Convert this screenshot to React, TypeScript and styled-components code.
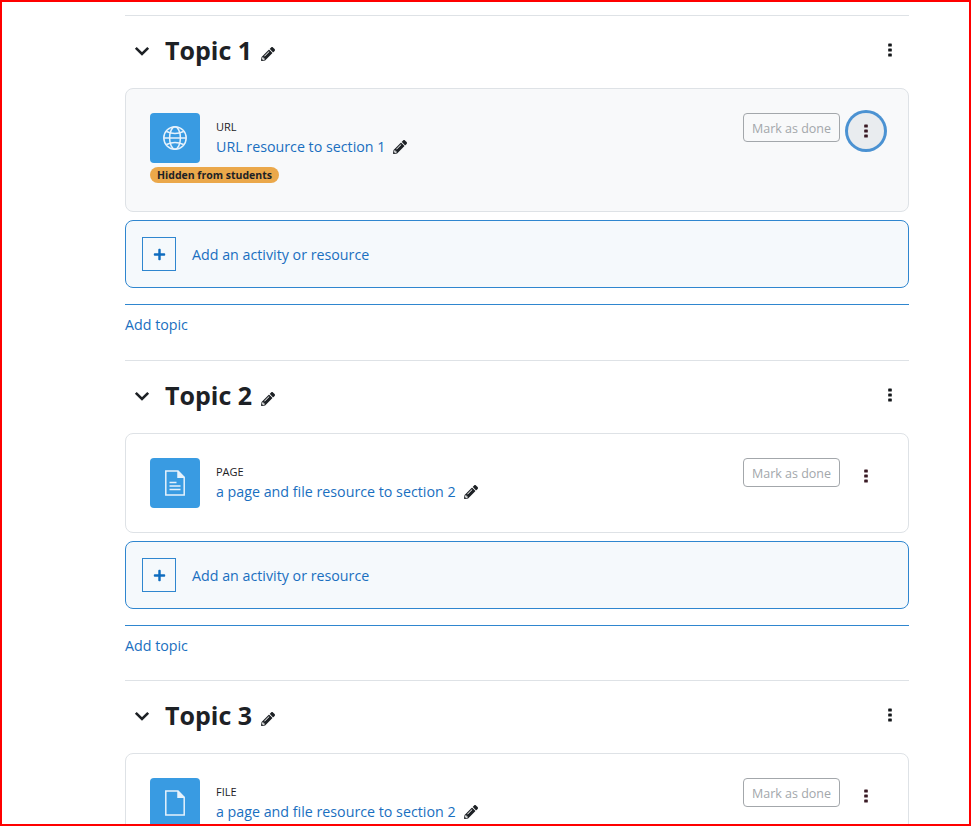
import React from "react";
import styled, { createGlobalStyle } from "styled-components";
import { FaPencilAlt, FaPlus } from "react-icons/fa";

const GlobalStyle = createGlobalStyle`
  html, body {
    margin: 0;
    padding: 0;
    background: #fff;
  }
`;

const Frame = styled.div`
  box-sizing: border-box;
  width: 971px;
  height: 826px;
  overflow: hidden;
  border: 2px solid #ff0000;
  padding: 13px 60px 0 123px;
  background: #fff;
  color: #1d2125;
  font-family: "Open Sans", "Noto Sans", sans-serif;
  font-size: 14.25px;
`;

const Section = styled.section`
  border-top: 1px solid #dee2e6;
  padding-top: 12px;
`;

const SectionHeader = styled.div`
  display: flex;
  align-items: center;
  height: 44px;
  margin-bottom: 16px;
`;

const Chevron = styled.svg`
  width: 16px;
  height: 16px;
  margin: 2px 15px 0 9px;
  color: #1d2125;
`;

const Title = styled.h3`
  margin: 0 9px 0 0;
  font-size: 25px;
  font-weight: 700;
  line-height: 44px;
`;

const TitlePencil = styled(FaPencilAlt)`
  width: 14px;
  height: 14px;
  margin-top: 7px;
  color: #1d2125;
`;

const Kebab = styled.svg`
  width: 4px;
  height: 14px;
  fill: ${(p) => p.color || "#14171a"};
`;

const HeaderMenu = styled.div`
  display: flex;
  margin-left: auto;
  margin-right: 17px;
`;

const Card = styled.div<{ $tinted?: boolean }>`
  display: flex;
  justify-content: space-between;
  box-sizing: border-box;
  padding: 24px;
  border: 1px solid #dee2e6;
  border-radius: 8px;
  background: ${(p) => (p.$tinted ? "#f8f9fa" : "#fff")};
`;

const CardMain = styled.div`
  display: flex;
  flex-direction: column;
`;

const Activity = styled.div`
  display: flex;
  align-items: center;
`;

const IconTile = styled.div`
  display: flex;
  align-items: center;
  justify-content: center;
  width: 50px;
  height: 50px;
  margin-right: 16px;
  border-radius: 4px;
  background: #399be2;
`;

const TileIcon = styled.svg`
  width: 26px;
  height: 26px;
  fill: none;
  stroke: #e6f2fc;
  stroke-width: 1.5;
`;

const ActivityText = styled.div`
  display: flex;
  flex-direction: column;
  padding-bottom: 1px;
`;

const ActivityType = styled.div`
  font-size: 11px;
  line-height: 16px;
  height: 16px;
  margin-bottom: 2px;
  color: #1d2125;
`;

const ActivityName = styled.div`
  display: flex;
  align-items: center;
  height: 20px;
`;

const ActivityLink = styled.a`
  color: #1a6fc0;
  text-decoration: none;
`;

const NamePencil = styled(FaPencilAlt)`
  width: 14px;
  height: 14px;
  margin-left: 8px;
  color: #1d2125;
`;

const Badge = styled.span`
  align-self: flex-start;
  box-sizing: border-box;
  height: 16px;
  margin: 4px 0;
  padding: 0 7px;
  border-radius: 8px;
  background: #eba84a;
  color: #1d2125;
  font-size: 10.5px;
  font-weight: 700;
  line-height: 16px;
`;

const CardActions = styled.div`
  display: flex;
  align-items: flex-start;
  gap: 8px;
`;

const DoneButton = styled.button`
  box-sizing: border-box;
  width: 97px;
  height: 29px;
  padding: 1px 0 0;
  border: 1px solid #a3a7ab;
  border-radius: 4px;
  background: transparent;
  color: #a3a7ab;
  font-family: inherit;
  font-size: 12.5px;
`;

const MenuButton = styled.button<{ $focused?: boolean }>`
  display: flex;
  align-items: center;
  justify-content: center;
  width: 36px;
  height: 36px;
  padding: 0;
  border: 0;
  border-radius: 50%;
  background: ${(p) => (p.$focused ? "#e9ecef" : "transparent")};
  box-shadow: ${(p) => (p.$focused ? "0 0 0 3px #4b92d2" : "none")};
`;

const AddActivity = styled.div`
  display: flex;
  align-items: center;
  box-sizing: border-box;
  height: 68px;
  margin-top: 8px;
  padding-left: 16px;
  border: 1px solid #2f86cf;
  border-radius: 8px;
  background: #f5f9fc;
  color: #1a6fc0;
`;

const PlusBox = styled.div`
  display: flex;
  align-items: center;
  justify-content: center;
  box-sizing: border-box;
  width: 34px;
  height: 34px;
  margin-right: 16px;
  border: 1px solid #2f86cf;
`;

const PlusIcon = styled(FaPlus)`
  width: 13px;
  height: 13px;
  color: #0f6cbf;
`;

const AddTopic = styled.div<{ $tall?: boolean }>`
  box-sizing: content-box;
  margin-top: 16px;
  padding-top: 10px;
  height: ${(p) => (p.$tall ? 45 : 44)}px;
  border-top: 1px solid #2f86cf;
  line-height: 20px;

  a {
    color: #1a6fc0;
    text-decoration: none;
  }
`;

const Dots = ({ color }: { color?: string }) => (
  <Kebab viewBox="0 0 4 14" color={color}>
    <rect x="0.2" y="0.4" width="3.6" height="3.2" rx="0.6" />
    <rect x="0.2" y="5.4" width="3.6" height="3.2" rx="0.6" />
    <rect x="0.2" y="10.4" width="3.6" height="3.2" rx="0.6" />
  </Kebab>
);

const GlobeIcon = () => (
  <TileIcon viewBox="0 0 26 26">
    <circle cx="13" cy="13" r="11.2" />
    <ellipse cx="13" cy="13" rx="5.4" ry="11.2" />
    <path d="M4.5 6.5Q13 10.5 21.5 6.5M2 13h22M4.5 19.5Q13 15.5 21.5 19.5" />
  </TileIcon>
);

const PageIcon = () => (
  <TileIcon viewBox="0 0 26 26">
    <path d="M3.8 1h12.2l6.2 6.2V25H3.8z" />
    <path d="M16 1v6.2h6.2" fill="#e6f2fc" />
    <path d="M7.5 12.5h7M7.5 16h11M7.5 19.5h11" />
  </TileIcon>
);

const FileIcon = () => (
  <TileIcon viewBox="0 0 26 26">
    <path d="M3.8 1h12.2l6.2 6.2V25H3.8z" />
    <path d="M16 1v6.2h6.2" fill="#e6f2fc" />
  </TileIcon>
);

type Topic = {
  title: string;
  type: string;
  name: string;
  icon: React.ReactNode;
  hidden?: boolean;
};

const topics: Topic[] = [
  { title: "Topic 1", type: "URL", name: "URL resource to section 1", icon: <GlobeIcon />, hidden: true },
  { title: "Topic 2", type: "PAGE", name: "a page and file resource to section 2", icon: <PageIcon /> },
  { title: "Topic 3", type: "FILE", name: "a page and file resource to section 2", icon: <FileIcon /> },
];

const App: React.FC = () => (
  <Frame>
    <GlobalStyle />
    {topics.map((topic) => (
      <Section key={topic.title}>
        <SectionHeader>
          <Chevron viewBox="0 0 16 16" fill="none" stroke="currentColor" strokeWidth="2.6">
            <path d="M1.8 4.8L8 11l6.2-6.2" />
          </Chevron>
          <Title>{topic.title}</Title>
          <TitlePencil />
          <HeaderMenu>
            <Dots />
          </HeaderMenu>
        </SectionHeader>
        <Card $tinted={topic.hidden}>
          <CardMain>
            <Activity>
              <IconTile>{topic.icon}</IconTile>
              <ActivityText>
                <ActivityType>{topic.type}</ActivityType>
                <ActivityName>
                  <ActivityLink href="#">{topic.name}</ActivityLink>
                  <NamePencil />
                </ActivityName>
              </ActivityText>
            </Activity>
            {topic.hidden && <Badge>Hidden from students</Badge>}
          </CardMain>
          <CardActions>
            <DoneButton>Mark as done</DoneButton>
            <MenuButton $focused={topic.hidden}>
              <Dots color="#3a1a24" />
            </MenuButton>
          </CardActions>
        </Card>
        <AddActivity>
          <PlusBox>
            <PlusIcon />
          </PlusBox>
          Add an activity or resource
        </AddActivity>
        <AddTopic $tall={topic.hidden}>
          <a href="#">Add topic</a>
        </AddTopic>
      </Section>
    ))}
  </Frame>
);

export default App;
